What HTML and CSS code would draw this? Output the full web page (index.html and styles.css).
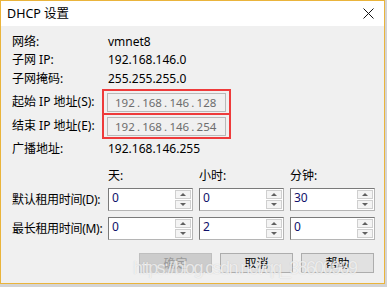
FILE: index.html
```html
<!DOCTYPE html>
<html lang="zh-CN">

<head>
    <meta charset="UTF-8">
    <title>DHCP 设置</title>
    <link rel="stylesheet" href="styles.css">
</head>

<body>
    <div class="dialog">
        <div class="titlebar">
            <span class="title">DHCP 设置</span>
            <span class="close">
                <svg width="11" height="11" viewBox="0 0 11 11"><path d="M0.5 0.5 L10.5 10.5 M10.5 0.5 L0.5 10.5" stroke="#111" stroke-width="1"/></svg>
            </span>
        </div>

        <div class="content">
            <div class="row r1">
                <span class="label">网络:</span>
                <span class="value">vmnet8</span>
            </div>
            <div class="row r2">
                <span class="label">子网 IP:</span>
                <span class="value">192.168.146.0</span>
            </div>
            <div class="row r3">
                <span class="label">子网掩码:</span>
                <span class="value">255.255.255.0</span>
            </div>

            <div class="ip-row first">
                <span class="label">起始 IP 地址(S):</span>
                <div class="mark">
                    <div class="ip-input">192 . 168 . 146 . 128</div>
                </div>
            </div>
            <div class="ip-row second">
                <span class="label">结束 IP 地址(E):</span>
                <div class="mark">
                    <div class="ip-input">192 . 168 . 146 . 254</div>
                </div>
            </div>

            <div class="row r6">
                <span class="label">广播地址:</span>
                <span class="value">192.168.146.255</span>
            </div>

            <div class="lease-head">
                <span class="col">天:</span>
                <span class="col">小时:</span>
                <span class="col">分钟:</span>
            </div>

            <div class="lease-row d">
                <span class="label">默认租用时间(D):</span>
                <div class="spin"><span>0</span><div class="arrows"><i class="up"></i><i class="down"></i></div></div>
                <div class="spin"><span>0</span><div class="arrows"><i class="up"></i><i class="down"></i></div></div>
                <div class="spin"><span>30</span><div class="arrows"><i class="up"></i><i class="down"></i></div></div>
            </div>
            <div class="lease-row m">
                <span class="label">最长租用时间(M):</span>
                <div class="spin"><span>0</span><div class="arrows"><i class="up"></i><i class="down"></i></div></div>
                <div class="spin"><span>2</span><div class="arrows"><i class="up"></i><i class="down"></i></div></div>
                <div class="spin"><span>0</span><div class="arrows"><i class="up"></i><i class="down"></i></div></div>
            </div>

            <div class="buttons">
                <button class="btn disabled">确定</button>
                <button class="btn">取消</button>
                <button class="btn">帮助</button>
            </div>
        </div>

        <div class="watermark">https://blog.csdn.net/qq_38600969</div>
    </div>
</body>

</html>
```

FILE: styles.css
```css
* {
    margin: 0;
    padding: 0;
    box-sizing: border-box;
}

body {
    background-color: #d4d4d4;
    font-family: "Noto Sans", "Noto Sans CJK SC", sans-serif;
    font-size: 12px;
    color: #000;
}

.dialog {
    position: relative;
    width: 385px;
    height: 284px;
    border: 1px solid #eab43b;
    background-color: #f0f0f0;
    overflow: hidden;
}

.titlebar {
    height: 25px;
    background-color: #fff;
    display: flex;
    align-items: center;
    justify-content: space-between;
    padding: 0 10px 0 6px;
}

.title {
    font-size: 12.5px;
    line-height: 16px;
}

.close {
    display: flex;
}

.content {
    padding: 7px 0 0 11px;
}

.row {
    display: flex;
    align-items: center;
    height: 18px;
    line-height: 16px;
}

.r3 {
    height: 19px;
}

.label {
    width: 96px;
    flex-shrink: 0;
    line-height: 16px;
    white-space: nowrap;
}

.ip-row {
    display: flex;
    align-items: center;
}

.ip-row .label {
    width: 90px;
}

.ip-row.first {
    margin-top: 1px;
}

.ip-row.second {
    margin-top: -2px;
}

.mark {
    width: 129px;
    height: 26px;
    border: 2px solid #ee3b3b;
    display: flex;
    align-items: center;
    padding-left: 3px;
}

.ip-input {
    width: 119px;
    height: 19px;
    border: 1px solid #b9b9b9;
    background-color: #f0f0f0;
    color: #6d6d6d;
    font-size: 11.5px;
    line-height: 17px;
    padding-left: 7px;
    word-spacing: -0.8px;
    white-space: nowrap;
    overflow: hidden;
}

.r6 {
    margin-top: 1px;
}

.lease-head {
    display: flex;
    height: 18px;
    line-height: 16px;
    margin-top: 10px;
    padding-left: 96px;
}

.lease-head .col {
    width: 91px;
}

.lease-row {
    display: flex;
    align-items: center;
    height: 23px;
    gap: 6px;
}

.lease-row .label {
    width: 90px;
    letter-spacing: -0.3px;
}

.lease-row.d {
    margin-top: 2px;
}

.lease-row.m {
    margin-top: 6px;
}

.spin {
    width: 85px;
    height: 23px;
    border: 1px solid #7a7a7a;
    border-right-color: #b5b5b5;
    border-bottom-color: #b5b5b5;
    background-color: #fff;
    display: flex;
    justify-content: space-between;
    padding: 1px 1px 1px 3px;
}

.spin span {
    line-height: 16px;
    color: #10106a;
}

.arrows {
    width: 16px;
    display: flex;
    flex-direction: column;
    gap: 1px;
}

.arrows i {
    flex: 1;
    border: 1px solid #cfcfcf;
    background-color: #f4f4f4;
    position: relative;
}

.arrows i::after {
    content: "";
    position: absolute;
    left: 4px;
    top: 2px;
    border-left: 3px solid transparent;
    border-right: 3px solid transparent;
}

.arrows .up::after {
    border-bottom: 3px solid #606060;
}

.arrows .down::after {
    border-top: 3px solid #606060;
}

.buttons {
    display: flex;
    gap: 8px;
    margin-top: 13px;
    padding-left: 127px;
}

.btn {
    width: 73px;
    height: 20px;
    border: 1px solid #adadad;
    background-color: #e1e1e1;
    font-family: "Noto Sans CJK SC", sans-serif;
    font-size: 12px;
    line-height: 16px;
    color: #000;
}

.btn.disabled {
    background-color: #cccccc;
    border-color: #bfbfbf;
    color: #9a9a9a;
}

.watermark {
    position: absolute;
    left: 132px;
    top: 257px;
    font-family: "Liberation Sans", sans-serif;
    font-size: 18px;
    letter-spacing: -1.6px;
    color: rgba(255, 255, 255, 0.7);
    text-shadow: 0 0 1px rgba(140, 140, 140, 0.4);
    white-space: nowrap;
}
```
